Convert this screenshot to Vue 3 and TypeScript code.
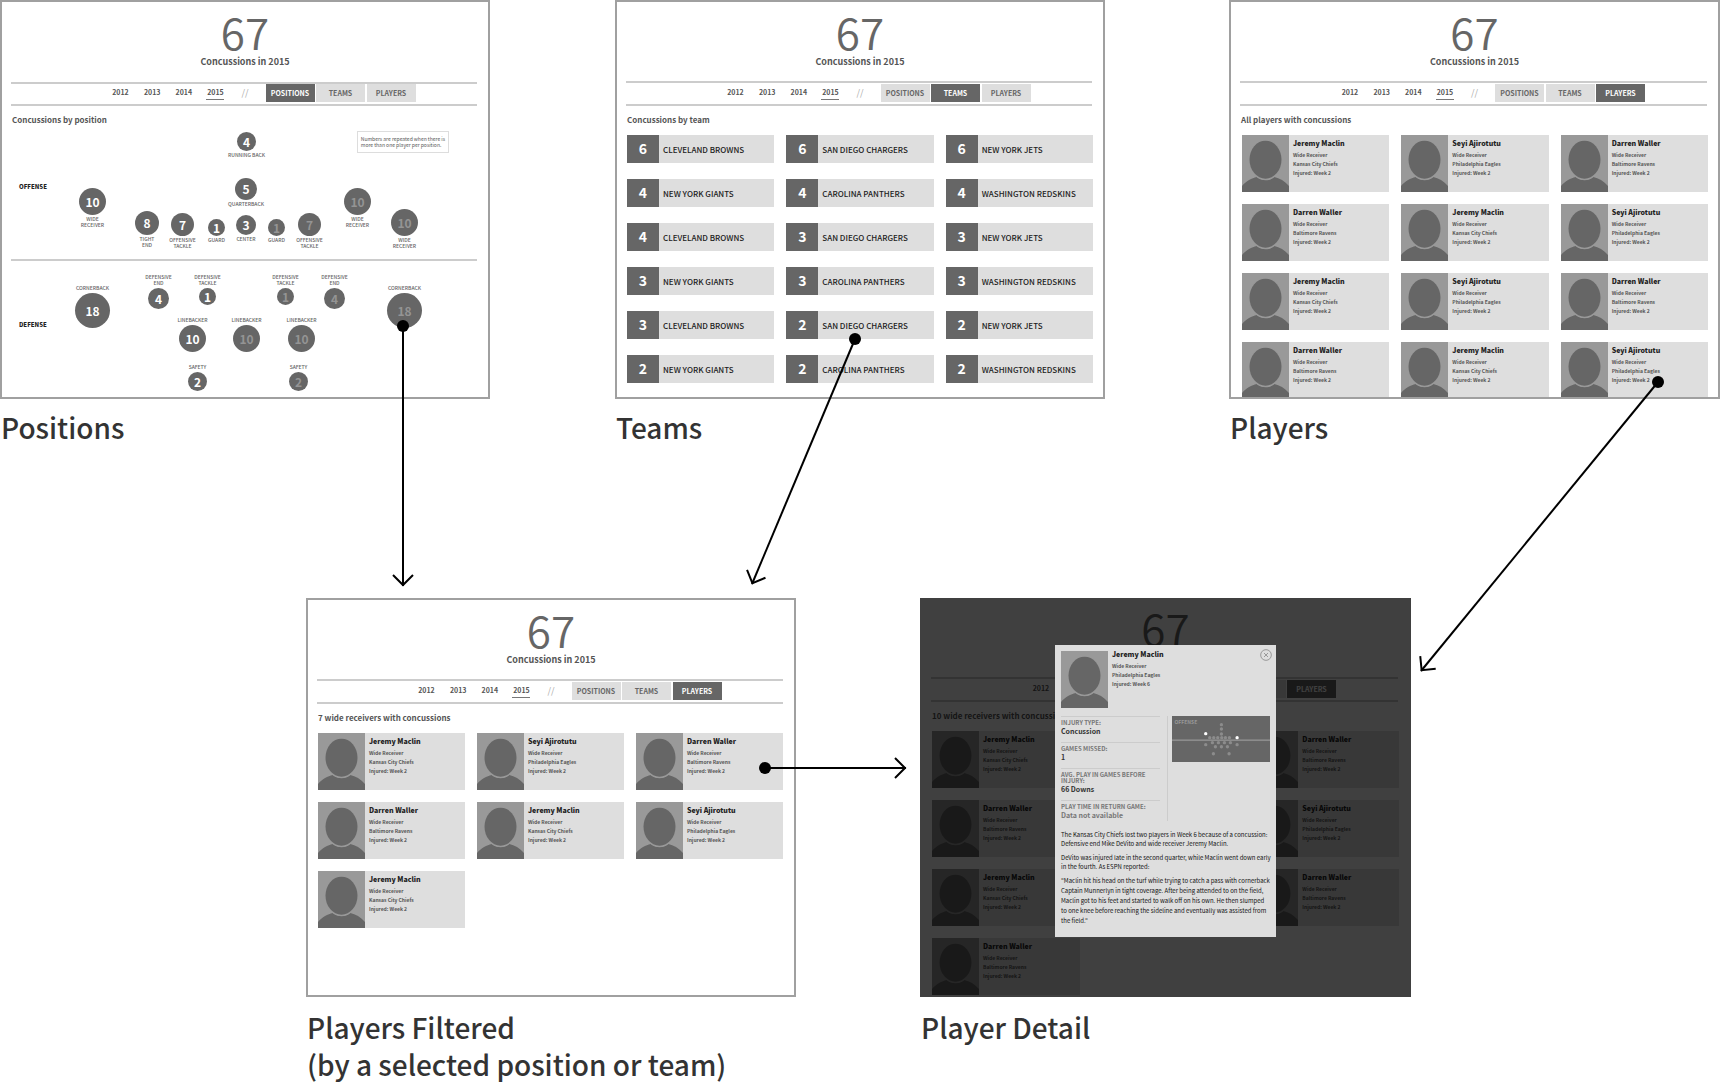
<script setup lang="ts">
import { defineComponent, h } from 'vue'

type View = 'positions' | 'teams' | 'players'

interface Player { name: string; team: string }
interface Team { count: number; name: string }
interface Spot { x: number; y: number; size: number; count: number; label: string[]; above?: boolean; repeat?: boolean }
interface Screen {
  id: string
  view: View
  title: string
  caption: string[]
  spots?: Spot[]
  teams?: Team[]
  players?: (Player | null)[]
  detail?: boolean
}

const years = [2012, 2013, 2014, 2015]
const views: View[] = ['positions', 'teams', 'players']

const maclin: Player = { name: 'Jeremy Maclin', team: 'Kansas City Chiefs' }
const seyi: Player = { name: 'Seyi Ajirotutu', team: 'Philadelphia Eagles' }
const waller: Player = { name: 'Darren Waller', team: 'Baltimore Ravens' }
const rowA = [maclin, seyi, waller]
const rowB = [waller, maclin, seyi]

const teamRows: [number[], string[]][] = [
  [[6, 6, 6], ['Cleveland Browns', 'San Diego Chargers', 'New York Jets']],
  [[4, 4, 4], ['New York Giants', 'Carolina Panthers', 'Washington Redskins']],
  [[4, 3, 3], ['Cleveland Browns', 'San Diego Chargers', 'New York Jets']],
  [[3, 3, 3], ['New York Giants', 'Carolina Panthers', 'Washington Redskins']],
  [[3, 2, 2], ['Cleveland Browns', 'San Diego Chargers', 'New York Jets']],
  [[2, 2, 2], ['New York Giants', 'Carolina Panthers', 'Washington Redskins']],
]
const teams: Team[] = teamRows.flatMap(([counts, names]) =>
  names.map((name, i) => ({ count: counts[i], name })))

// Spots are centred on x, y in a 490 x 399 screen.
const spots: Spot[] = [
  { x: 246, y: 141, size: 19, count: 4, label: ['Running back'] },
  { x: 246, y: 189, size: 22, count: 5, label: ['Quarterback'] },
  { x: 92, y: 201, size: 27, count: 10, label: ['Wide', 'receiver'] },
  { x: 147, y: 223, size: 24, count: 8, label: ['Tight', 'end'] },
  { x: 182, y: 224, size: 23, count: 7, label: ['Offensive', 'tackle'] },
  { x: 216, y: 227, size: 17, count: 1, label: ['Guard'] },
  { x: 246, y: 225, size: 20, count: 3, label: ['Center'] },
  { x: 276, y: 227, size: 17, count: 1, label: ['Guard'], repeat: true },
  { x: 309, y: 224, size: 23, count: 7, label: ['Offensive', 'tackle'], repeat: true },
  { x: 357, y: 201, size: 27, count: 10, label: ['Wide', 'receiver'], repeat: true },
  { x: 404, y: 222, size: 27, count: 10, label: ['Wide', 'receiver'], repeat: true },
  { x: 92, y: 310, size: 35, count: 18, label: ['Cornerback'], above: true },
  { x: 158, y: 298, size: 21, count: 4, label: ['Defensive', 'end'], above: true },
  { x: 207, y: 296, size: 17, count: 1, label: ['Defensive', 'tackle'], above: true },
  { x: 285, y: 296, size: 17, count: 1, label: ['Defensive', 'tackle'], above: true, repeat: true },
  { x: 334, y: 298, size: 21, count: 4, label: ['Defensive', 'end'], above: true, repeat: true },
  { x: 404, y: 310, size: 35, count: 18, label: ['Cornerback'], above: true, repeat: true },
  { x: 192, y: 338, size: 27, count: 10, label: ['Linebacker'], above: true },
  { x: 246, y: 338, size: 27, count: 10, label: ['Linebacker'], above: true, repeat: true },
  { x: 301, y: 338, size: 27, count: 10, label: ['Linebacker'], above: true, repeat: true },
  { x: 197, y: 381, size: 19, count: 2, label: ['Safety'], above: true },
  { x: 298, y: 381, size: 19, count: 2, label: ['Safety'], above: true, repeat: true },
]

const screens: Screen[] = [
  { id: 'positions', view: 'positions', title: 'Concussions by position', caption: ['Positions'], spots },
  { id: 'teams', view: 'teams', title: 'Concussions by team', caption: ['Teams'], teams },
  { id: 'all-players', view: 'players', title: 'All players with concussions', caption: ['Players'], players: [...rowA, ...rowB, ...rowA, ...rowB] },
  { id: 'filtered', view: 'players', title: '7 wide receivers with concussions', caption: ['Players Filtered', '(by a selected position or team)'], players: [...rowA, ...rowB, maclin] },
  // The dialog covers the middle column, so its cells stay empty.
  { id: 'detail', view: 'players', title: '10 wide receivers with concussions', caption: ['Player Detail'], players: [maclin, null, waller, waller, null, seyi, maclin, null, waller, waller], detail: true },
]

const facts = [
  { label: 'Injury type:', value: 'Concussion' },
  { label: 'Games missed:', value: '1' },
  { label: 'Avg. play in games before injury:', value: '66 Downs' },
  { label: 'Play time in return game:', value: 'Data not available', muted: true },
]

const story = [
  ['The Kansas City Chiefs lost two players in Week 6 because of a concussion:', 'Defensive end Mike DeVito and wide receiver Jeremy Maclin.'],
  ['DeVito was injured late in the second quarter, while Maclin went down early', 'in the fourth. As ESPN reported:'],
]
const quote = [
  '"Maclin hit his head on the turf while trying to catch a pass with cornerback',
  'Captain Munnerlyn in tight coverage. After being attended to on the field,',
  'Maclin got to his feet and started to walk off on his own. He then slumped',
  'to one knee before reaching the sideline and eventually was assisted from',
  'the field."',
]

const mapDots: [number, number, boolean?][] = [
  [148, 26], [148, 39], [148, 54], [101, 53, true], [195, 65, true],
  [113, 65], [125, 65], [137, 65], [149, 65], [160, 65], [172, 65],
  [101, 86], [121, 80], [139, 80], [157, 80], [175, 80], [195, 86],
  [130, 92], [148, 92], [166, 92], [124, 113], [171, 113],
]

const flows = [
  { from: [403, 326], to: [403, 586] },
  { from: [855, 339], to: [752, 584] },
  { from: [1658, 382], to: [1421, 671] },
  { from: [765, 768], to: [906, 768] },
]
const boardX = (x: number) => `${(x / 1720) * 100}%`

const spotStyle = (s: Spot) => ({
  left: `calc(${((s.x - 2) / 486) * 100}% - ${Math.floor(s.size / 2)}px)`,
  top: `${s.y - 2 - Math.floor(s.size / 2)}px`,
  width: `${s.size}px`,
  height: `${s.size}px`,
})

const Portrait = defineComponent({
  setup: () => () =>
    h('svg', { viewBox: '0 0 141 171', width: 47, height: 57, 'aria-hidden': 'true', style: { display: 'block', flex: 'none' } }, [
      h('rect', { width: 141, height: 171, fill: '#999' }),
      h('path', { d: 'M0 171V153C12 138 30 129 44 126C60 139 82 139 97 126C112 129 129 138 141 153V171Z', fill: '#666' }),
      h('ellipse', { cx: 70.5, cy: 75, rx: 50, ry: 60, fill: '#999' }),
      h('ellipse', { cx: 70.5, cy: 74, rx: 48, ry: 57, fill: '#666' }),
    ]),
})
</script>

<template>
  <main class="board">
    <section v-for="s in screens" :key="s.id" class="screen" :class="'screen--' + s.id">
      <div class="frame">
        <header class="hero">
          <strong class="total">67</strong>
          <span v-if="!s.detail" class="total-label">Concussions in 2015</span>
        </header>
        <nav class="bar">
          <div class="years">
            <a v-for="y in years" :key="y" href="#" class="year" :class="{ current: y === 2015 }">{{ y }}</a>
          </div>
          <span class="slashes">//</span>
          <div class="tabs">
            <button v-for="v in views" :key="v" type="button" class="tab" :class="{ active: v === s.view }">{{ v }}</button>
          </div>
        </nav>
        <h2 class="title">{{ s.title }}</h2>

        <template v-if="s.spots">
          <p class="note">Numbers are repeated when there is<br>more than one player per position.</p>
          <h3 class="side side--offense">Offense</h3>
          <hr class="scrimmage">
          <h3 class="side side--defense">Defense</h3>
          <button
            v-for="(p, i) in s.spots" :key="i" type="button" class="spot"
            :class="{ repeat: p.repeat }" :style="spotStyle(p)"
          >
            {{ p.count }}
            <span class="spot-label" :class="{ above: p.above }">
              <span v-for="line in p.label" :key="line">{{ line }}</span>
            </span>
          </button>
        </template>

        <div v-if="s.teams" class="grid grid--teams">
          <a v-for="(t, i) in s.teams" :key="i" href="#" class="team">
            <b class="team-count">{{ t.count }}</b>
            <span class="team-name">{{ t.name }}</span>
          </a>
        </div>

        <div v-if="s.players" class="grid">
          <template v-for="(p, i) in s.players" :key="i">
            <a v-if="p" href="#" class="player">
              <Portrait />
              <span class="who">
                <b class="name">{{ p.name }}</b>
                <span>Wide Receiver</span>
                <span>{{ p.team }}</span>
                <span>Injured: Week 2</span>
              </span>
            </a>
            <span v-else />
          </template>
        </div>

        <div v-if="s.detail" class="overlay">
          <article class="modal" role="dialog" aria-label="Jeremy Maclin">
            <div class="modal-head">
              <Portrait />
              <span class="who">
                <b class="name">Jeremy Maclin</b>
                <span>Wide Receiver</span>
                <span>Philadelphia Eagles</span>
                <span>Injured: Week 6</span>
              </span>
              <button type="button" class="close" aria-label="Close">
                <svg viewBox="0 0 36 36" width="12" height="12">
                  <circle cx="18" cy="18" r="16" /><path d="M12 12L24 24M24 12L12 24" />
                </svg>
              </button>
            </div>
            <div class="modal-mid">
              <dl class="facts">
                <div v-for="f in facts" :key="f.label" class="fact">
                  <dt>{{ f.label }}</dt>
                  <dd :class="{ muted: f.muted }">{{ f.value }}</dd>
                </div>
              </dl>
              <div class="map-side">
                <div class="map">
                  <span class="map-label">Offense</span>
                  <svg class="map-dots" viewBox="0 0 295 138">
                    <rect x="0" y="70" width="295" height="5" fill="#8c8c8c" />
                    <circle v-for="([x, y, on], i) in mapDots" :key="i" :cx="x" :cy="y" r="5" :fill="on ? '#fff' : '#8c8c8c'" />
                  </svg>
                </div>
              </div>
            </div>
            <div class="story">
              <p v-for="(lines, i) in story" :key="i">
                <span v-for="line in lines" :key="line">{{ line }}</span>
              </p>
              <blockquote>
                <span v-for="line in quote" :key="line">{{ line }}</span>
              </blockquote>
            </div>
          </article>
        </div>
      </div>
      <h1 class="caption"><span v-for="c in s.caption" :key="c">{{ c }}</span></h1>
    </section>

    <svg class="flows" aria-hidden="true">
      <defs>
        <marker id="head" markerUnits="userSpaceOnUse" markerWidth="24" markerHeight="24" refX="16" refY="12" orient="auto">
          <path d="M5 2L15 12L5 22" fill="none" stroke="#000" stroke-width="2" />
        </marker>
      </defs>
      <g v-for="(f, i) in flows" :key="i">
        <line :x1="boardX(f.from[0])" :y1="f.from[1]" :x2="boardX(f.to[0])" :y2="f.to[1]" stroke="#000" stroke-width="2" marker-end="url(#head)" />
        <circle :cx="boardX(f.from[0])" :cy="f.from[1]" r="6" />
      </g>
    </svg>
  </main>
</template>

<style>
body {
  background: #fff;
}
</style>

<style scoped>
.board {
  position: relative;
  display: grid;
  grid-template-columns: 306fr 184fr 125fr 181fr 124fr 185fr 124fr 182fr 309fr;
  row-gap: 152px;
  font-family: "Noto Sans CJK SC", "Noto Sans", sans-serif;
  color: #555;
}
.board * {
  box-sizing: border-box;
}
.screen--positions { grid-area: 1 / 1 / 2 / 3; }
.screen--teams { grid-area: 1 / 4 / 2 / 7; }
.screen--all-players { grid-area: 1 / 8 / 2 / 10; }
.screen--filtered { grid-area: 2 / 2 / 3 / 5; }
.screen--detail { grid-area: 2 / 6 / 3 / 9; }

.frame {
  position: relative;
  height: 399px;
  overflow: hidden;
  border: 2px solid #a0a0a0;
  background: #fff;
}
.caption {
  display: flex;
  flex-direction: column;
  margin: 10px 0 0 1px;
  font-size: 28px;
  line-height: 37px;
  font-weight: 500;
  color: #333;
  white-space: nowrap;
}
.screen--filtered .caption,
.screen--detail .caption {
  margin-top: 12px;
}

.hero {
  display: flex;
  flex-direction: column;
  align-items: center;
  height: 66px;
  padding-top: 7px;
}
.total {
  font-size: 44px;
  line-height: 45px;
  font-weight: 350;
  color: #666;
}
.total-label {
  font-size: 9px;
  line-height: 15px;
  font-weight: 700;
}
.bar {
  display: flex;
  justify-content: center;
  height: 25px;
  margin: 13px 11px 0 9px;
  padding: 1px 0 0 39px;
  border: solid #ccc;
  border-width: 2px 0;
}
.screen--positions .bar {
  height: 24px;
  margin-top: 14px;
  padding-top: 0;
}
.years {
  display: flex;
  justify-content: space-between;
  width: 113px;
}
.year {
  width: 18px;
  height: 16px;
  font-size: 7px;
  line-height: 16px;
  font-weight: 700;
  text-align: center;
  text-decoration: none;
  color: #555;
}
.year.current {
  border-bottom: 1px solid #777;
}
.slashes {
  width: 41px;
  font-size: 9px;
  line-height: 18px;
  text-align: center;
  color: #aaa;
}
.tabs {
  display: flex;
  justify-content: space-between;
  width: 150px;
}
.tab {
  width: 49px;
  height: 18px;
  padding: 0;
  border: 0;
  background: #dedede;
  font: 700 7px/18px "Noto Sans CJK SC", "Noto Sans", sans-serif;
  text-transform: uppercase;
  color: #666;
}
.tab.active {
  background: #666;
  color: #fff;
}
.title {
  margin: 7px 0 0 10px;
  font-size: 8px;
  line-height: 14px;
  font-weight: 700;
}

.note {
  position: absolute;
  top: 129px;
  left: 73%;
  margin: 0;
  padding: 4px 3px;
  border: 1px solid #ddd;
  font-size: 5px;
  line-height: 6px;
  font-weight: 400;
  color: #555;
  white-space: nowrap;
}
.side {
  position: absolute;
  left: 17px;
  margin: 0;
  font-size: 6px;
  line-height: 8px;
  font-weight: 900;
  text-transform: uppercase;
  color: #222;
}
.side--offense { top: 181px; }
.side--defense { top: 319px; }
.scrimmage {
  position: absolute;
  top: 257px;
  left: 9px;
  right: 11px;
  height: 2px;
  margin: 0;
  border: 0;
  background: #ccc;
}
.spot {
  position: absolute;
  display: flex;
  align-items: center;
  justify-content: center;
  padding: 0;
  border: 0;
  border-radius: 50%;
  background: #666;
  font: 700 12px/16px "Noto Sans CJK SC", "Noto Sans", sans-serif;
  color: #fff;
}
.spot.repeat {
  color: #949494;
}
.spot-label {
  position: absolute;
  top: 100%;
  left: 50%;
  display: flex;
  flex-direction: column;
  margin-top: 1px;
  transform: translateX(-50%);
  font-size: 5px;
  line-height: 6px;
  font-weight: 500;
  text-transform: uppercase;
  white-space: nowrap;
  color: #666;
}
.spot-label.above {
  top: auto;
  bottom: 100%;
  margin: 0 0 2px;
}

.grid {
  display: grid;
  grid-template-columns: repeat(3, 1fr);
  gap: 12px;
  margin: 8px 11px 0 10px;
}
.screen--all-players .grid {
  margin-left: 11px;
  margin-right: 10px;
}
.grid--teams {
  row-gap: 16px;
  margin-right: 10px;
}
.team {
  display: flex;
  height: 28px;
  background: #dedede;
  text-decoration: none;
  text-transform: uppercase;
  white-space: nowrap;
}
.team-count {
  width: 32px;
  background: #666;
  font-size: 14px;
  line-height: 27px;
  text-align: center;
  color: #fff;
}
.team-name {
  padding-left: 4px;
  font-size: 8px;
  line-height: 29px;
  font-weight: 500;
  color: #222;
}
.player {
  display: flex;
  height: 57px;
  background: #dedede;
  text-decoration: none;
}
.who {
  display: flex;
  flex-direction: column;
  padding: 2px 0 0 4px;
  font-size: 5px;
  line-height: 9px;
  font-weight: 700;
  color: #555;
  white-space: nowrap;
}
.name {
  font-size: 7px;
  line-height: 12px;
  margin-bottom: 1px;
  color: #222;
}

.screen--detail .frame {
  border-width: 0;
}
.screen--detail .bar {
  margin-left: 11px;
  margin-right: 13px;
}
.screen--detail .title {
  margin-left: 12px;
}
.screen--detail .grid {
  margin-left: 12px;
  margin-right: 12px;
}
.overlay {
  position: absolute;
  inset: 0;
  display: flex;
  justify-content: center;
  align-items: flex-start;
  padding-top: 47px;
  background: rgba(0, 0, 0, 0.75);
}
.modal {
  width: 45%;
  min-width: 221px;
  min-height: 292px;
  padding: 6px;
  background: #dedede;
}
.modal-head {
  display: flex;
}
.modal-head .who {
  margin-top: -3px;
  padding-top: 0;
}
.close {
  display: flex;
  width: 12px;
  height: 12px;
  margin: -2px -2px 0 auto;
  padding: 0;
  border: 0;
  background: none;
}
.close svg {
  fill: none;
  stroke: #999;
  stroke-width: 3;
}
.modal-mid {
  display: flex;
  gap: 7px;
  margin-top: 8px;
}
.facts {
  flex: 1;
  margin: 0;
}
.fact {
  padding-top: 3px;
  border-top: 1px solid #ccc;
}
.fact dt {
  font-size: 6px;
  line-height: 6px;
  font-weight: 700;
  text-transform: uppercase;
  color: #777;
}
.fact dd {
  margin: 0;
  padding-bottom: 5px;
  font-size: 7px;
  line-height: 11px;
  font-weight: 700;
  color: #333;
}
.fact dd.muted {
  padding-bottom: 0;
  color: #777;
}
.map-side {
  flex: 1;
  padding-left: 4px;
  border-left: 1px solid #ccc;
}
.map {
  position: relative;
  background: #666;
}
.map-dots {
  display: block;
  width: 100%;
}
.map-label {
  position: absolute;
  top: 2px;
  left: 3px;
  font-size: 5px;
  line-height: 8px;
  font-weight: 700;
  text-transform: uppercase;
  color: #999;
}
.story {
  margin-top: 9px;
  font-size: 6px;
  line-height: 9px;
  font-weight: 400;
  color: #111;
  white-space: nowrap;
}
.story span {
  display: block;
}
.story p {
  margin: 0 0 5px;
}
.story blockquote {
  margin: 0;
  line-height: 10px;
}
.flows {
  position: absolute;
  top: 0;
  left: 0;
  width: 100%;
  height: 100%;
  pointer-events: none;
}
</style>
